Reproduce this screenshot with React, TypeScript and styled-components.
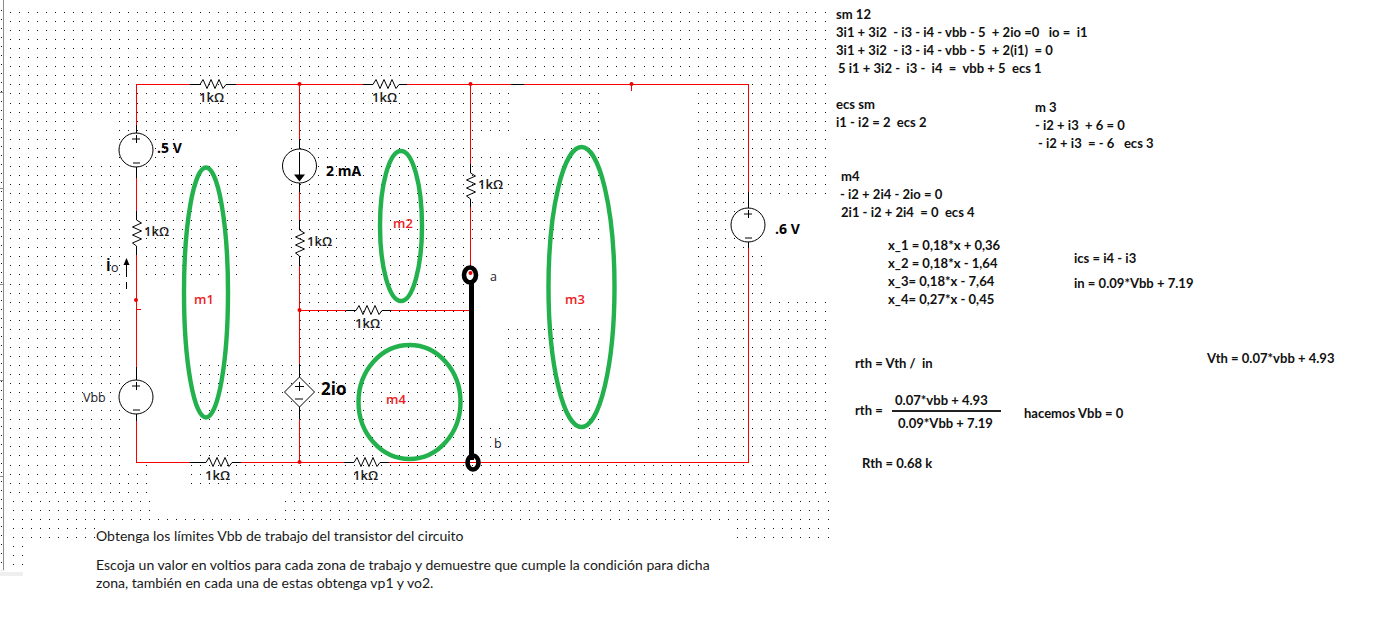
import React, { useMemo } from "react";
import styled, { createGlobalStyle } from "styled-components";

const Global = createGlobalStyle`
  html, body { margin: 0; padding: 0; background: #fff; overflow: hidden; }
`;

const Page = styled.main`
  position: relative;
  display: flex;
  width: 1400px;
  height: 644px;
  background: #fff;
  overflow: hidden;
`;

const Schematic = styled.svg`
  display: block;
  flex: 0 0 832px;
  width: 832px;
  height: 644px;
`;

const Dot = styled.rect`
  fill: #111;
`;

const Wire = styled.polyline`
  fill: none;
  stroke: #f60000;
  stroke-width: 1;
`;

const Lead = styled.polyline`
  fill: none;
  stroke: #000;
  stroke-width: 1;
`;

const SourceBody = styled.circle`
  fill: #fff;
  stroke: #000;
  stroke-width: 1;
`;

const Mesh = styled.ellipse`
  fill: none;
  stroke: #22b14c;
  stroke-width: 4.4;
`;

const Junction = styled.circle`
  fill: #f00000;
`;

const Terminal = styled.ellipse`
  fill: none;
  stroke: #000;
  stroke-width: 4.6;
`;

const Short = styled.line`
  stroke: #000;
  stroke-width: 5;
`;

const Ruler = styled.line`
  stroke: #8c8c8c;
  stroke-width: 1;
`;

const RulerEnd = styled.rect`
  fill: #efefef;
`;

const ValueLabel = styled.text`
  font: 600 13px "Open Sans", "Liberation Sans", sans-serif;
  fill: #1c1c1c;
`;

const SourceLabel = styled.text`
  font: 700 14px "Open Sans", "Liberation Sans", sans-serif;
  fill: #000;
`;

const BigLabel = styled(SourceLabel)`
  font-size: 17px;
`;

const MeshLabel = styled.text`
  font: 600 13px "Open Sans", "Liberation Sans", sans-serif;
  fill: #ed1c24;
`;

const NodeLabel = styled.text`
  font: 400 12.5px "Open Sans", "Liberation Sans", sans-serif;
  fill: #1a1a2a;
`;

const Statement = styled.section`
  position: absolute;
  left: 96px;
  top: 527px;
  width: 640px;
  display: flex;
  flex-direction: column;
  gap: 11px;
  font: 400 14.05px/18px Lato, "Liberation Sans", sans-serif;
  color: #1a1a1a;
`;

const StatementLine = styled.p`
  margin: 0;
  white-space: pre-line;
  background: #fff;
`;

const Notes = styled.section`
  position: relative;
  flex: 1;
  font: 700 13.05px/16px Lato, "Liberation Sans", sans-serif;
  color: #111;
`;

const Note = styled.div<{ $x: number; $y: number }>`
  position: absolute;
  left: ${(p) => p.$x - 832}px;
  top: ${(p) => p.$y - 8}px;
  white-space: pre;
`;

const FractionBar = styled.div`
  position: absolute;
  left: 60px;
  top: 410px;
  width: 109px;
  height: 1.5px;
  background: #222;
`;

type Box = [number, number, number, number];

const gaps: Box[] = [
  [78, 113, 118, 160],
  [123, 160, 137, 465],
  [182, 133, 245, 165],
  [245, 120, 282, 283],
  [137, 283, 299, 363],
  [137, 363, 197, 455],
  [150, 465, 190, 500],
  [150, 490, 283, 510],
  [472, 240, 507, 425],
  [507, 240, 603, 326],
  [510, 90, 553, 130],
  [603, 90, 692, 460],
  [475, 133, 517, 150],
  [750, 197, 772, 250],
  [750, 200, 830, 210],
  [770, 200, 830, 300],
  [96, 530, 477, 644],
];

function makeDots() {
  const dots: { x: number; y: number }[] = [];
  for (let r = 0; r < 63; r++) {
    const y = Math.round(12 + r * 9.05);
    if (y > 568) continue;
    dots.push({ x: 1, y: y - 2 });
    for (let c = 0; c < 92; c++) {
      const x = Math.round(10 + c * 9.05 + (y > 495 ? 3 : 0));
      if (x > 828) continue;
      if (y > 541 && x > 25) continue;
      if (gaps.some(([a, b, cc, d]) => x >= a && x <= cc && y >= b && y <= d)) continue;
      dots.push({ x, y });
    }
  }
  return dots;
}

const rH = (x: number, y: number) =>
  `${x},${y} ${x + 3},${y - 5} ${x + 7},${y + 4} ${x + 11},${y - 5} ${x + 15},${y + 4} ${x + 19},${y - 5} ${x + 23},${y + 4} ${x + 26},${y}`;
const rV = (x: number, y: number) =>
  `${x},${y} ${x + 5},${y + 3} ${x - 4},${y + 7} ${x + 5},${y + 11} ${x - 4},${y + 15} ${x + 5},${y + 19} ${x - 4},${y + 23} ${x},${y + 26}`;

const wires = [
  "136.5,125 136.5,84.5 190,84.5",
  "236,84.5 363,84.5",
  "407,84.5 511,84.5",
  "524,84.5 748.5,84.5 748.5,192",
  "136.5,178 136.5,211",
  "136.5,255 136.5,367",
  "136.5,421 136.5,462.5 190,462.5",
  "241,462.5 344,462.5",
  "389,462.5 748.5,462.5 748.5,248",
  "299.5,84.5 299.5,139",
  "299.5,192 299.5,220",
  "299.5,266 299.5,364",
  "299.5,419 299.5,462",
  "299.5,310.5 346,310.5",
  "391,310.5 470,310.5",
  "470.5,84.5 470.5,164",
  "470.5,207 470.5,268",
  "631.5,84 631.5,91",
  "137,309.5 141,309.5",
];

const leads = [
  "136.5,125 136.5,133",
  "136.5,167 136.5,178",
  "136.5,211 136.5,220",
  "136.5,246 136.5,255",
  "136.5,367 136.5,380",
  "136.5,414 136.5,421",
  "299.5,139 299.5,149",
  "299.5,183 299.5,192",
  "299.5,220 299.5,230",
  "299.5,256 299.5,266",
  "299.5,364 299.5,377",
  "299.5,407 299.5,419",
  "470.5,164 470.5,173",
  "470.5,199 470.5,207",
  "748.5,192 748.5,208",
  "748.5,242 748.5,248",
  "511,84.5 524,84.5",
  "190,84.5 200,84.5",
  "226,84.5 236,84.5",
  "363,84.5 373,84.5",
  "399,84.5 407,84.5",
  "190,462.5 206,462.5",
  "232,462.5 241,462.5",
  "344,462.5 354,462.5",
  "380,462.5 389,462.5",
  "346,310.5 356,310.5",
  "382,310.5 391,310.5",
];

const horizontalResistors: [number, number][] = [
  [200, 84.5],
  [373, 84.5],
  [206, 462.5],
  [354, 462.5],
  [356, 310.5],
];
const verticalResistors: [number, number][] = [
  [136.5, 220],
  [299.5, 230],
  [470.5, 173],
];
const sources: [number, number][] = [
  [136, 150],
  [136, 397],
  [748, 225],
];
const values: [number, number][] = [
  [199, 102],
  [372, 102],
  [144, 236],
  [307, 246],
  [478, 189],
  [355, 328],
  [205, 480],
  [353, 480],
];

const notes: [number, number, string][] = [
  [836, 14, "sm 12"],
  [836, 32, "3i1 + 3i2  - i3 - i4 - vbb - 5  + 2io =0   io =  i1"],
  [836, 50, "3i1 + 3i2  - i3 - i4 - vbb - 5  + 2(i1)  = 0"],
  [838, 68, "5 i1 + 3i2 -  i3 -  i4  =  vbb + 5  ecs 1"],
  [836, 104, "ecs sm"],
  [836, 122, "i1 - i2 = 2  ecs 2"],
  [1035, 107, "m 3"],
  [1035, 125, "- i2 + i3  + 6 = 0"],
  [1038, 143, "- i2 + i3  = - 6   ecs 3"],
  [841, 176, "m4"],
  [840, 194, "- i2 + 2i4 - 2io = 0"],
  [841, 212, "2i1 - i2 + 2i4  = 0  ecs 4"],
  [888, 245, "x_1 = 0,18*x + 0,36"],
  [888, 263, "x_2 = 0,18*x - 1,64"],
  [888, 281, "x_3= 0,18*x - 7,64"],
  [888, 299, "x_4= 0,27*x - 0,45"],
  [1074, 258, "ics = i4 - i3"],
  [1074, 283, "in = 0.09*Vbb + 7.19"],
  [855, 363, "rth = Vth /  in"],
  [1207, 358, "Vth = 0.07*vbb + 4.93"],
  [855, 410, "rth ="],
  [895, 400, "0.07*vbb + 4.93"],
  [898, 423, "0.09*Vbb + 7.19"],
  [1024, 413, "hacemos Vbb = 0"],
  [862, 463, "Rth = 0.68 k"],
];

const Sign = ({ cx, cy }: { cx: number; cy: number }) => (
  <>
    <Lead points={`${cx - 4},${cy - 11} ${cx + 4},${cy - 11}`} />
    <Lead points={`${cx + 0.5},${cy - 15} ${cx + 0.5},${cy - 7}`} />
    <Lead points={`${cx - 3},${cy + 13} ${cx + 4},${cy + 13}`} />
  </>
);

export default function App() {
  const dots = useMemo(makeDots, []);
  return (
    <Page>
      <Global />
      <Schematic viewBox="0 0 832 644">
        <g shapeRendering="crispEdges">
          {dots.map((d, i) => (
            <Dot key={i} x={d.x} y={d.y} width={1} height={1} />
          ))}
          <Ruler x1={3.5} y1={0} x2={3.5} y2={570} />
          {[92, 188, 284, 380, 476].map((y) => (
            <Ruler key={y} x1={0} y1={y + 0.5} x2={3} y2={y + 0.5} />
          ))}
          <RulerEnd x={0} y={570} width={5} height={1} />
          <RulerEnd x={0} y={572} width={23} height={4} />
          {wires.map((p) => (
            <Wire key={p} points={p} />
          ))}
          {leads.map((p) => (
            <Lead key={p} points={p} />
          ))}
        </g>
        {horizontalResistors.map(([x, y]) => (
          <Lead key={`${x}-${y}`} points={rH(x, y)} />
        ))}
        {verticalResistors.map(([x, y]) => (
          <Lead key={`${x}-${y}`} points={rV(x, y)} />
        ))}
        {sources.map(([cx, cy]) => (
          <g key={cx + cy}>
            <SourceBody cx={cx} cy={cy} r={17} />
            <Sign cx={cx} cy={cy} />
          </g>
        ))}
        <SourceBody cx={299.5} cy={166} r={17} />
        <Lead points="299.5,152 299.5,175" />
        <path d="M294 174.5h11l-5.5 7z" fill="#000" />
        <path d="M299.5 377 314.5 392 299.5 407 284.5 392z" fill="#fff" stroke="#000" />
        <Lead points="295,386.5 304,386.5" />
        <Lead points="299.5,382 299.5,391" />
        <Lead points="295,399 303,399" />

        <Mesh cx={206} cy={292.5} rx={22} ry={125} />
        <Mesh cx={401} cy={226} rx={21} ry={75} />
        <Mesh cx={581.5} cy={287} rx={33} ry={140} />
        <Mesh cx={409.5} cy={402} rx={51} ry={57} />

        <Short x1={471.5} y1={280} x2={471.5} y2={460} />
        <Terminal cx={470} cy={275} rx={6} ry={7.5} />
        <Terminal cx={473} cy={462.5} rx={5.5} ry={7} />
        {[
          [299.5, 84],
          [470.5, 84],
          [631.5, 84],
          [136, 300],
          [299.5, 462],
          [299.5, 310],
          [470.5, 273],
        ].map(([cx, cy]) => (
          <Junction key={`${cx}-${cy}`} cx={cx} cy={cy} r={2} />
        ))}

        {values.map(([x, y]) => (
          <ValueLabel key={`${x}-${y}`} x={x} y={y}>
            1kΩ
          </ValueLabel>
        ))}
        <SourceLabel x={157} y={153}>.5 V</SourceLabel>
        <SourceLabel x={326} y={176}>2 mA</SourceLabel>
        <SourceLabel x={775} y={234}>.6 V</SourceLabel>
        <BigLabel x={321} y={395}>2io</BigLabel>
        <NodeLabel x={83} y={402}>Vbb</NodeLabel>
        <NodeLabel x={490} y={281}>a</NodeLabel>
        <NodeLabel x={494} y={448}>b</NodeLabel>
        <SourceLabel x={106} y={271}>İ</SourceLabel>
        <NodeLabel x={111} y={272}>o</NodeLabel>
        <g shapeRendering="crispEdges">
          <Lead points="126.5,262 126.5,277" />
          <Lead points="126.5,282 126.5,289" />
        </g>
        <path d="M126.5 258l-3 7h6z" fill="#000" />

        <MeshLabel x={194} y={304}>m1</MeshLabel>
        <MeshLabel x={393} y={228}>m2</MeshLabel>
        <MeshLabel x={565} y={304}>m3</MeshLabel>
        <MeshLabel x={386} y={404}>m4</MeshLabel>
      </Schematic>
      <Statement>
        <StatementLine>Obtenga los límites Vbb de trabajo del transistor del circuito</StatementLine>
        <StatementLine>
          {"Escoja un valor en voltios para cada zona de trabajo y demuestre que cumple la condición para dicha\nzona, también en cada una de estas obtenga vp1 y vo2."}
        </StatementLine>
      </Statement>
      <Notes>
        {notes.map(([x, y, text]) => (
          <Note key={`${x}-${y}`} $x={x} $y={y}>
            {text}
          </Note>
        ))}
        <FractionBar />
      </Notes>
    </Page>
  );
}
